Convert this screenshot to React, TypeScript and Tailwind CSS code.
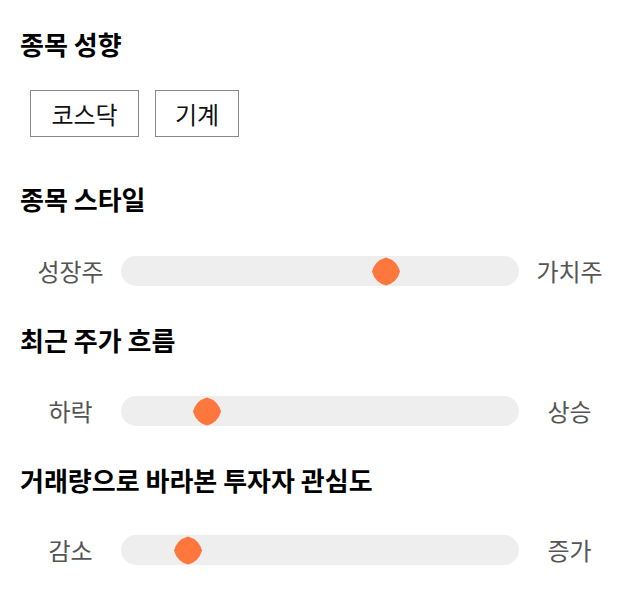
const font = { fontFamily: '"Noto Sans CJK KR", "Noto Sans", sans-serif' };

type SliderProps = { left: string; right: string; value: number };

/* 마름모꼴 썸 */
function Thumb() {
  return (
    <svg width="29" height="29" viewBox="0 0 29 29" className="block">
      <path
        d="M14.5 0.5 Q25.5 3.5 28.5 14.5 Q25.5 25.5 14.5 28.5 Q3.5 25.5 0.5 14.5 Q3.5 3.5 14.5 0.5 Z"
        fill="#ff773d"
      />
    </svg>
  );
}

function Slider({ left, right, value }: SliderProps) {
  return (
    <div className="flex items-center h-[30px]">
      <span className="w-[101px] text-center text-[24px] leading-[30px] text-[#555]">{left}</span>
      <div className="relative flex-1 h-[30px] rounded-full bg-[#eeeeee]">
        <div
          className="absolute top-[1px] -translate-x-1/2"
          style={{ left: `${value}%` }}
        >
          <Thumb />
        </div>
      </div>
      <span className="w-[101px] text-center text-[24px] leading-[30px] text-[#555]">{right}</span>
    </div>
  );
}

function Heading({ children }: { children: React.ReactNode }) {
  return <h2 className="text-[26px] leading-[32px] font-bold text-black">{children}</h2>;
}

const tag = "h-[47px] flex items-center justify-center border border-[#888] text-[24px] text-[#111]";

export default function App() {
  return (
    <div className="w-[640px] h-[606px] bg-white px-5 pt-[28px]" style={font}>
      {/* 종목 성향 */}
      <Heading>종목 성향</Heading>
      <div className="flex gap-4 pl-[10px] mt-[30px]">
        <div className={`${tag} w-[109px]`}>코스닥</div>
        <div className={`${tag} w-[84px]`}>기계</div>
      </div>

      <div className="mt-[46px]">
        <Heading>종목 스타일</Heading>
      </div>
      <div className="mt-[41px]">
        <Slider left="성장주" right="가치주" value={66.5} />
      </div>

      <div className="mt-[38px]">
        <Heading>최근 주가 흐름</Heading>
      </div>
      <div className="mt-[40px]">
        <Slider left="하락" right="상승" value={21.5} />
      </div>

      <div className="mt-[38px]">
        <Heading>거래량으로 바라본 투자자 관심도</Heading>
      </div>
      <div className="mt-[39px]">
        <Slider left="감소" right="증가" value={16.8} />
      </div>
    </div>
  );
}
